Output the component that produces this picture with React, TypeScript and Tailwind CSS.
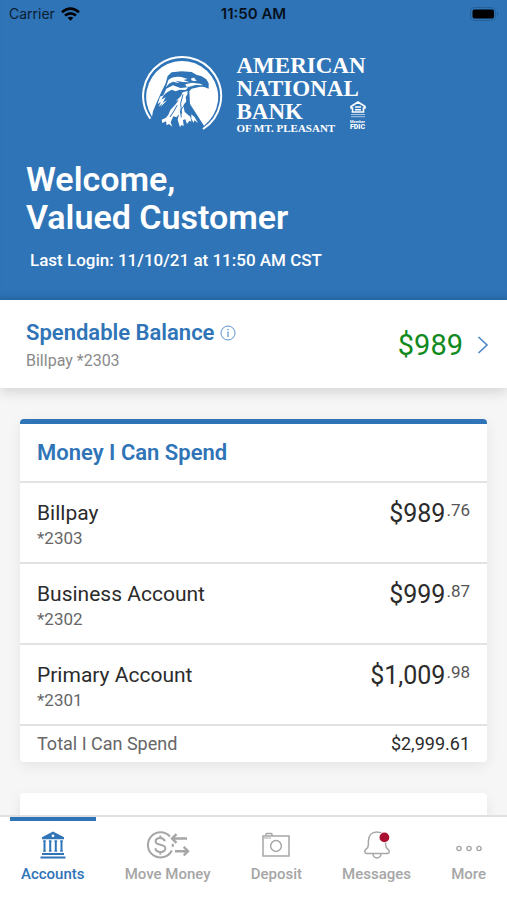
import type { ReactNode } from "react";

type Account = { name: string; mask: string; dollars: string; cents: string };

const accounts: Account[] = [
  { name: "Billpay", mask: "*2303", dollars: "$989", cents: ".76" },
  { name: "Business Account", mask: "*2302", dollars: "$999", cents: ".87" },
  { name: "Primary Account", mask: "*2301", dollars: "$1,009", cents: ".98" },
];

function WifiIcon() {
  return (
    <svg viewBox="0 0 19 14" className="h-[14px] w-[19px]" aria-hidden="true">
      <g fill="none" stroke="currentColor" strokeWidth="2.6">
        <path d="M1 5.2 Q9.5 -2 18 5.2" />
        <path d="M4 8.6 Q9.5 4 15 8.6" />
      </g>
      <path d="M6.6 10.8 Q9.5 8.6 12.4 10.8 L9.5 13.8 Z" fill="currentColor" />
    </svg>
  );
}

function BatteryIcon() {
  return (
    <svg viewBox="0 0 30 14" className="h-[14px] w-[30px]" aria-hidden="true">
      <rect x="1.5" y="0.5" width="25" height="13" rx="4" fill="none" stroke="#24609c" />
      <rect x="3.5" y="2.5" width="21.5" height="9" rx="2" fill="#000" />
      <path d="M28 4.8 Q30.3 7 28 9.2 Z" fill="#24609c" />
    </svg>
  );
}

function EagleLogo() {
  return (
    <svg viewBox="0 0 252 240" className="h-[80px] w-[84px]" aria-hidden="true">
      <path
        d="M28 194 A117 117 0 1 1 186 225"
        fill="none"
        stroke="#fff"
        strokeWidth="6"
      />
      <path
        fill="#fff"
        d="M33 188 A108 108 0 1 1 189 215 L147 150 L145 112 L152 104 L178 98 L190 99 L203 104 L203 88 L196 76 L182 67 L166 62 L152 54 L122 52 L92 55 L80 66 L74 88 L62 112 L46 148 L36 172 Z"
      />
      <g fill="#fff">
        <path d="M82 78 Q96 66 121 69 L140 75 L127 78 L146 85 L126 84 L104 80 L116 88 L96 83 L84 89 L75 100 Z" />
        <path d="M76 104 L96 94 L118 102 L142 100 L134 108 L116 107 L104 112 L92 107 L76 116 L66 126 Z" />
        <path d="M151 72 L163 71 L160 75 L168 79 L160 82 L151 79 Z" />
        <path d="M133 91 L153 86 L177 89 L187 94 L164 93 L145 98 L136 98 Z" />
        <path d="M125 115 L140 111 L139 121 L134 130 L136 142 L127 154 L131 174 L148 188 L151 203 L145 200 L138 210 L133 196 L126 198 L128 216 L121 213 L117 220 L110 197 L114 181 L106 190 L97 187 L89 205 L94 218 L84 210 L77 214 L75 202 L64 207 L62 197 L75 191 L82 182 L88 168 L104 151 L113 138 L105 141 L120 126 Z" />
        <path d="M57 128 L68 124 L61 137 L74 130 L65 146 L78 139 L58 160 L65 148 L53 158 L60 143 L50 151 Z" />
        <path d="M151 181 L161 190 L171 207 L160 199 L158 207 L151 194 Z" />
      </g>
      <g fill="none" stroke="#2f74b7" strokeWidth="3">
        <path d="M126 121 L119 148 L122 180" />
        <path d="M108 154 L99 171 L87 189" />
        <path d="M128 157 L118 169 L121 190" />
      </g>
    </svg>
  );
}

function HousingBadge() {
  return (
    <svg viewBox="0 0 16 17" className="h-[17px] w-[16px]" aria-hidden="true">
      <path d="M1 5.5 L8 1 L15 5.5 V7 H13.5 V11 H2.5 V7 H1 Z" fill="none" stroke="#fff" strokeWidth="1.6" />
      <path d="M5 6 H11 M5 8.7 H11" stroke="#fff" strokeWidth="1.5" />
      <path d="M1 13.5 H15 M1 15.7 H15" stroke="#fff" strokeOpacity="0.6" strokeWidth="1" />
    </svg>
  );
}

function InfoIcon() {
  return (
    <svg viewBox="0 0 16 16" className="size-4" aria-hidden="true">
      <circle cx="8" cy="8" r="7" fill="none" stroke="currentColor" />
      <path d="M8 6.6 V12" stroke="currentColor" strokeWidth="1.2" />
      <circle cx="8" cy="4.5" r="0.8" fill="currentColor" />
    </svg>
  );
}

function BankIcon() {
  return (
    <svg viewBox="0 0 28 28" className="size-7" aria-hidden="true">
      <path
        fill="currentColor"
        fillRule="evenodd"
        d="M14 0.5 L25 6.2 V8.2 H3 V6.2 Z M14 3.4 A1.4 1.4 0 1 0 14 6.2 A1.4 1.4 0 1 0 14 3.4 Z"
      />
      <path
        stroke="currentColor"
        strokeWidth="2"
        d="M5.5 9.5 V20.5 M11.2 9.5 V20.5 M16.8 9.5 V20.5 M22.5 9.5 V20.5"
      />
      <path
        stroke="currentColor"
        strokeWidth="1"
        d="M4 10 H7 M9.7 10 H12.7 M15.3 10 H18.3 M21 10 H24 M4 20 H7 M9.7 20 H12.7 M15.3 20 H18.3 M21 20 H24"
      />
      <path stroke="currentColor" strokeWidth="2" d="M3 23 H25 M1.5 26.5 H26.5" />
    </svg>
  );
}

function MoveMoneyIcon() {
  return (
    <svg viewBox="0 0 44 28" className="h-7 w-[44px]" fill="none" stroke="currentColor" strokeWidth="2" aria-hidden="true">
      <path d="M24 5.6 A12.6 12.6 0 1 0 25.8 19.5" />
      <path d="M26.8 12.8 A12.6 12.6 0 0 1 26.6 16" />
      <path d="M18.8 10.3 C18.2 8 16.4 7 14.2 7 C11.5 7 9.6 8.4 9.6 10.5 C9.6 15.2 19.3 12.3 19.3 17.3 C19.3 19.7 17.2 21 14.6 21 C11.8 21 9.8 19.8 9.3 17.2 M14.3 4.4 V7 M14.3 21 V23.6" />
      <path d="M41 7.5 H26 M30.5 3.2 L26 7.5 L30.5 11.8" strokeWidth="2.4" />
      <path d="M29 20.2 H42 M37.7 15.9 L42 20.2 L37.7 24.5" strokeWidth="2.4" />
    </svg>
  );
}

function CameraIcon() {
  return (
    <svg viewBox="0 0 30 28" className="h-7 w-[30px]" fill="none" stroke="currentColor" strokeWidth="1.5" aria-hidden="true">
      <path d="M2 5 H28 V25 H2 Z" />
      <path d="M5 5 V3.4 Q5 2.6 5.8 2.6 H10.2 Q11 2.6 11 3.4 V5" />
      <path d="M2.5 7 H10" strokeWidth="1" />
      <circle cx="15" cy="15" r="5.4" />
    </svg>
  );
}

function BellIcon() {
  return (
    <svg viewBox="0 0 28 28" className="size-7" fill="none" stroke="currentColor" strokeWidth="1.5" aria-hidden="true">
      <path d="M14 1 C8.5 1 5.4 4.8 5.4 10 V13.5 C5.4 16.2 4.4 17.4 2.9 18.4 C1.4 19.4 1.3 22.4 3.2 22.4 H24.8 C26.7 22.4 26.6 19.4 25.1 18.4 C23.6 17.4 22.6 16.2 22.6 13.5 V10 C22.6 4.8 19.5 1 14 1 Z" />
      <path d="M10 22.6 C10 25.2 11.8 27 14 27 C16.2 27 18 25.2 18 22.6" />
      <circle cx="21.4" cy="6.4" r="5.6" fill="#fff" stroke="none" />
      <circle cx="21.4" cy="6.4" r="4.9" fill="#aa1130" stroke="none" />
    </svg>
  );
}

function MoreIcon() {
  return (
    <svg viewBox="0 0 28 28" className="size-7" fill="none" stroke="currentColor" strokeWidth="1.4" aria-hidden="true">
      <circle cx="4" cy="17.5" r="2.1" />
      <circle cx="14" cy="17.5" r="2.1" />
      <circle cx="24" cy="17.5" r="2.1" />
    </svg>
  );
}

const tabs: { label: string; icon: ReactNode; active?: boolean }[] = [
  { label: "Accounts", icon: <BankIcon />, active: true },
  { label: "Move Money", icon: <MoveMoneyIcon /> },
  { label: "Deposit", icon: <CameraIcon /> },
  { label: "Messages", icon: <BellIcon /> },
  { label: "More", icon: <MoreIcon /> },
];

export default function App() {
  return (
    <div className="flex h-screen flex-col overflow-hidden bg-[#f6f6f6] font-['Roboto',sans-serif] text-[#2b2b2b]">
      <header className="shrink-0 bg-[#2f74b7] pb-7 text-white shadow-[inset_0_-8px_8px_-8px_rgba(20,60,110,0.4)]">
        <div className="grid grid-cols-3 items-center px-2 pt-1 font-['Inter',sans-serif] text-sm leading-5 text-[#0b1d30]">
          <div className="flex items-center gap-[6px] pl-px">
            <span>Carrier</span>
            <span className="text-black">
              <WifiIcon />
            </span>
          </div>
          <span className="text-center text-[15px] font-semibold text-[#06111d]">11:50 AM</span>
          <span className="justify-self-end">
            <BatteryIcon />
          </span>
        </div>

        <div className="mt-[30px] flex justify-center gap-[11px]">
          <EagleLogo />
          <div className="font-['Liberation_Serif',serif] font-bold">
            <div className="text-[23px] leading-[23px]">
              <p>AMERICAN</p>
              <p>NATIONAL</p>
            </div>
            <div className="flex justify-between">
              <div>
                <p className="text-[23px] leading-[23px]">BANK</p>
                <p className="text-[11px] leading-[10px]">OF MT. PLEASANT</p>
              </div>
              <div className="flex flex-col items-center pt-[1px]">
                <HousingBadge />
                <p className="pt-[2px] text-center font-['Roboto',sans-serif] text-[4px] leading-[4px]">Member</p>
                <p className="font-['Roboto',sans-serif] text-[7px] leading-[7px] font-black">FDIC</p>
              </div>
            </div>
          </div>
        </div>

        <div className="px-[26px] pt-[26px]">
          <h1 className="text-[34px] leading-[38px] font-semibold">
            Welcome,
            <br />
            Valued Customer
          </h1>
          <p className="px-1 pt-3 text-[17px] leading-6 font-medium">Last Login: 11/10/21 at 11:50 AM CST</p>
        </div>
      </header>

      <section className="z-10 flex shrink-0 items-center justify-between bg-white pt-[17px] pr-[18px] pb-[15px] pl-[26px] shadow-[0_4px_12px_rgba(0,0,0,0.14)]">
        <div>
          <h2 className="flex items-center gap-[6px] text-[22px] leading-8 font-semibold text-[#2f74b7]">
            Spendable Balance
            <button type="button" aria-label="About spendable balance" className="text-[#5b93cb]">
              <InfoIcon />
            </button>
          </h2>
          <p className="text-base leading-6 text-[#8a8a8a]">Billpay *2303</p>
        </div>
        <button type="button" aria-label="Spendable balance details" className="flex items-center gap-[14px]">
          <span className="text-[29px] leading-8 text-[#0f8a1c]">$989</span>
          <svg viewBox="0 0 12 20" className="h-5 w-3" fill="none" stroke="#4a86c5" strokeWidth="1.6" aria-hidden="true">
            <path d="M1.5 2 L10 10 L1.5 18" />
          </svg>
        </button>
      </section>

      <main className="flex min-h-0 flex-1 flex-col gap-[31px] overflow-y-auto px-5 pt-[31px] [scrollbar-width:none]">
        <section className="shrink-0 rounded-[4px] border-t-[5px] border-[#2f74b7] bg-white shadow-[0_4px_14px_rgba(0,0,0,0.07)]">
          <h2 className="px-[17px] pt-[14px] pb-[13px] text-[22px] leading-[30px] font-semibold text-[#2f74b7]">
            Money I Can Spend
          </h2>
          <ul>
            {accounts.map((account) => (
              <li key={account.mask} className="border-t-2 border-[#e2e2e2]">
                <button type="button" className="flex w-full items-start justify-between px-[17px] pt-4 pb-[12px] text-left">
                  <span>
                    <span className="block text-[21px] leading-7">{account.name}</span>
                    <span className="block text-[17px] leading-[23px] text-[#666666]">{account.mask}</span>
                  </span>
                  <span className="flex gap-px text-[25px] leading-[30px]">
                    {account.dollars}
                    <span className="text-[17px] leading-[22px] text-[#555555]">{account.cents}</span>
                  </span>
                </button>
              </li>
            ))}
          </ul>
          <div className="flex justify-between border-t-2 border-[#e2e2e2] px-[17px] py-[6px] text-lg leading-6">
            <span className="text-[#666666]">Total I Can Spend</span>
            <span>$2,999.61</span>
          </div>
        </section>
        <section className="h-24 shrink-0 rounded-[4px] bg-white shadow-[0_4px_14px_rgba(0,0,0,0.07)]" />
      </main>

      <nav className="z-10 flex shrink-0 justify-between border-t-2 border-[#e0e0e0] bg-white px-[10px]">
        {tabs.map((tab) => (
          <button
            key={tab.label}
            type="button"
            aria-current={tab.active ? "page" : undefined}
            className={
              tab.active
                ? "flex flex-col items-center border-t-4 border-[#2f74b7] px-[11px] pt-[10px] pb-4 text-[#2f74b7]"
                : "flex flex-col items-center border-t-4 border-transparent px-[11px] pt-[10px] pb-4 text-[#a6a6a6]"
            }
          >
            {tab.icon}
            <span className="pt-[5px] text-[15px] leading-5 font-medium">{tab.label}</span>
          </button>
        ))}
      </nav>
    </div>
  );
}
